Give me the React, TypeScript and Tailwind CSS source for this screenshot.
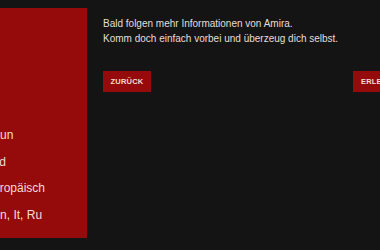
import React from "react";

const rows = [
  { text: "Augen: Braun", shift: "-ml-[60px]" },
  { text: "Haare: Blond", shift: "-ml-[64px]" },
  { text: "Typ: Europäisch", shift: "-ml-[41px]" },
  { text: "Sprachen: De, En, It, Ru", shift: "-ml-[88px]" },
];

export default function App() {
  return (
    <div
      className="flex w-[380px] h-[250px] overflow-hidden bg-[#141414]"
      style={{ fontFamily: '"Liberation Sans", Arial, sans-serif' }}
    >
      <div className="mt-[8px] h-[230px] w-[87px] shrink-0 overflow-hidden bg-[#950a0a] pt-[114px]">
        <ul className="flex flex-col text-[12px] leading-[26.67px] text-[#f3dcd6]">
          {rows.map((r) => (
            <li key={r.text} className={`whitespace-nowrap ${r.shift}`}>
              {r.text}
            </li>
          ))}
        </ul>
      </div>
      <div className="ml-[16px] shrink-0 pt-[16px]">
        <p className="text-[10px] leading-[15px] text-[#e6ded6]">
          Bald folgen mehr Informationen von Amira.
          <br />
          Komm doch einfach vorbei und überzeug dich selbst.
        </p>
        <div className="mt-[25px] flex gap-[202px]">
          <button className="flex h-[21px] w-[48px] shrink-0 items-center justify-center bg-[#950a0a] text-[7.5px] font-bold tracking-[0.2px] text-[#f3dcd6]">
            ZURÜCK
          </button>
          <button className="flex h-[21px] shrink-0 items-center justify-center whitespace-nowrap bg-[#950a0a] px-[8px] text-[7.5px] font-bold tracking-[0.2px] text-[#f3dcd6]">
            ERLEBE AMIRA
          </button>
        </div>
      </div>
    </div>
  );
}
